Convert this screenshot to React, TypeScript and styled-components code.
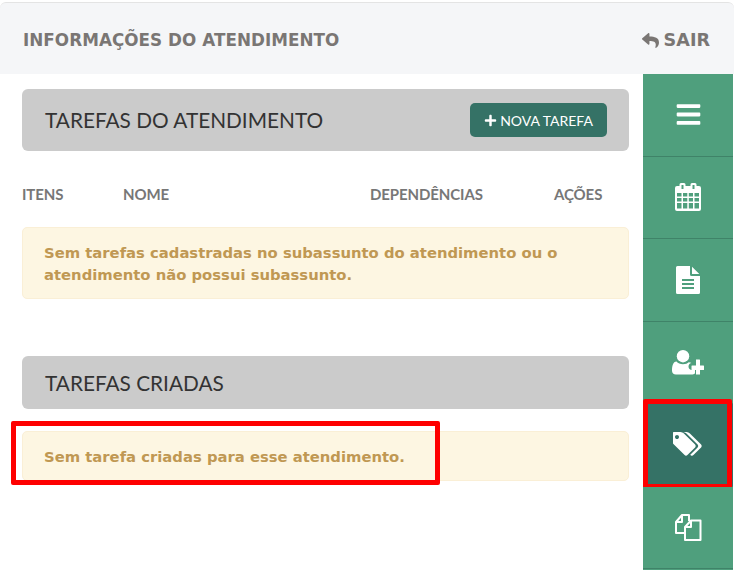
import React from 'react';
import styled, { createGlobalStyle } from 'styled-components';
import { FaBars, FaPlus, FaReply } from 'react-icons/fa';

const GlobalStyle = createGlobalStyle`
  html, body {
    margin: 0;
    padding: 0;
    background: #fff;
    overflow: hidden;
  }
  * { box-sizing: border-box; }
`;

const CalendarIcon = () => (
  <svg width="26" height="28" viewBox="0 0 26 28">
    <path
      fill="#fff"
      fillRule="evenodd"
      d="M6 0h3a1.5 1.5 0 0 1 1.5 1.5V3h5V1.5A1.500 1.500 0 0 1 17 0h3a1.500 1.500 0 0 1 1.500 1.500V3H24a2 2 0 0 1 2 2v21a2 2 0 0 1-2 2H2a2 2 0 0 1-2-2V5a2 2 0 0 1 2-2h2.500V1.500A1.500 1.500 0 0 1 6 0zM6.500 2v4h2V2zM17.500 2v4h2V2zM2 10v3.500h4.500V10zM8 10v3.500h4.300V10zM13.800 10v3.500H18V10zM19.500 10v3.500H24V10zM2 15v3.500h4.500V15zM8 15v3.500h4.300V15zM13.800 15v3.500H18V15zM19.500 15v3.500H24V15zM2 20v5.500h4.500V20zM8 20v5.500h4.300V20zM13.800 20v5.500H18V20zM19.500 20v5.500H24V20z"
    />
  </svg>
);

const DocIcon = () => (
  <svg width="24" height="28" viewBox="0 0 24 28">
    <path
      fill="#fff"
      fillRule="evenodd"
      d="M1.500 0H14v8.500a1.500 1.500 0 0 0 1.500 1.500H24v16.500a1.500 1.500 0 0 1-1.500 1.500h-21A1.500 1.500 0 0 1 0 26.500v-25A1.500 1.500 0 0 1 1.500 0zM6 13v2h12v-2zM6 17v2h12v-2zM6 21v2h12v-2zM16 0.800L23.300 8H16z"
    />
  </svg>
);

const UserPlusIcon = () => (
  <svg width="32" height="25" viewBox="0 0 32 25">
    <g fill="#fff">
      <circle cx="11" cy="6.200" r="6.200" />
      <path d="M4.500 11.500C6 13.200 8.300 14.200 11 14.200s4.500-1 5.700-2c1 0 2 .3 2.800.8-1.600.2-3 1.500-3 3.500 0 2 1.500 3.500 3.500 3.500h3v3.200c-1 1-2 1.300-3.500 1.300H4c-2.500 0-4-1.400-4-3.800 0-4.500 1-9.200 4.500-9.200z" />
      <path d="M24 9.500h3.500a.5.5 0 0 1 .5.5v5.500h3.500a.5.5 0 0 1 .5.5v3.500a.5.5 0 0 1-.5.5H28v4.500h-4V20h-4a.5.5 0 0 1-.5-.5V16a.5.5 0 0 1 .5-.5h4z" />
    </g>
  </svg>
);

const TagsIcon = () => (
  <svg width="30" height="26" viewBox="0 128 1920 1664">
    <path
      fill="#fff"
      d="M384 448q0-53-37.500-90.500t-90.500-37.500-90.500 37.500-37.500 90.500 37.500 90.500 90.500 37.500 90.500-37.500 37.500-90.500zm1067 576q0 53-37 90l-491 492q-39 37-91 37-53 0-90-37l-715-716q-38-37-64.500-101t-26.500-117v-416q0-52 38-90t90-38h416q53 0 117 26.500t102 64.500l715 714q37 39 37 91zm384 0q0 53-37 90l-491 492q-39 37-91 37-36 0-59-14t-53-45l470-470q37-37 37-90 0-52-37-91l-715-714q-38-38-102-64.500t-117-26.500h224q53 0 117 26.500t102 64.500l715 714q37 39 37 91z"
    />
  </svg>
);

const FilesIcon = () => (
  <svg width="28" height="28" viewBox="0 0 28 28">
    <g fill="none" stroke="#fff" strokeWidth="2" strokeLinejoin="round">
      <path d="M11 20H2V9l6-7h7v6" />
      <path d="M8 2.500V9H2" />
      <path d="M11 14l6-6.500h9.500V27H11z" />
      <path d="M17 7.500V14h-6" />
    </g>
  </svg>
);

const sideItems = [
  { key: 'menu', icon: <FaBars size={27} /> },
  { key: 'agenda', icon: <CalendarIcon /> },
  { key: 'docs', icon: <DocIcon /> },
  { key: 'user', icon: <UserPlusIcon /> },
  { key: 'tags', icon: <TagsIcon />, active: true },
  { key: 'files', icon: <FilesIcon /> },
];

export default function App() {
  return (
    <Page>
      <GlobalStyle />
      <Header>
        <HeaderTitle>INFORMAÇÕES DO ATENDIMENTO</HeaderTitle>
        <ExitLink>
          <FaReply size={17} />
          SAIR
        </ExitLink>
      </Header>
      <Body>
        <Main>
          <SectionHeader $tall>
            <SectionTitle>TAREFAS DO ATENDIMENTO</SectionTitle>
            <NewButton>
              <FaPlus size={13} />
              NOVA TAREFA
            </NewButton>
          </SectionHeader>
          <TableHead>
            <span>ITENS</span>
            <span>NOME</span>
            <span>DEPENDÊNCIAS</span>
            <span>AÇÕES</span>
          </TableHead>
          <Alert>
            Sem tarefas cadastradas no subassunto do atendimento ou o atendimento não possui subassunto.
          </Alert>
          <SectionHeader>
            <SectionTitle>TAREFAS CRIADAS</SectionTitle>
          </SectionHeader>
          <Alert $second>
            Sem tarefa criadas para esse atendimento.
            <AlertMark />
          </Alert>
        </Main>
        <Sidebar>
          {sideItems.map((item) => (
            <SideItem key={item.key} $active={item.active}>
              {item.icon}
              {item.active && <SideMark />}
            </SideItem>
          ))}
        </Sidebar>
      </Body>
    </Page>
  );
}

const Page = styled.div`
  width: 734px;
  height: 570px;
  padding-top: 2px;
  overflow: hidden;
  font-family: Lato, "Liberation Sans", sans-serif;
`;

const Header = styled.header`
  height: 72px;
  padding: 3px 24px 0 23px;
  display: flex;
  align-items: center;
  justify-content: space-between;
  background: #f5f6f8;
  border-top: 1px solid #e4e4e4;
  border-radius: 6px 6px 0 0;
  color: #7a7674;
  font-family: "DejaVu Sans", Verdana, sans-serif;
  font-weight: 700;
`;

const HeaderTitle = styled.h1`
  margin: 0;
  font-size: 16.8px;
  font-weight: 700;
  letter-spacing: 0.04px;
`;

const ExitLink = styled.a`
  display: flex;
  align-items: center;
  gap: 5px;
  font-size: 17.6px;
`;

const Body = styled.div`
  display: flex;
  align-items: stretch;
  height: 496px;
`;

const Main = styled.main`
  width: 643px;
  padding: 15px 14px 0 22px;
`;

const SectionHeader = styled.div<{ $tall?: boolean }>`
  height: ${(p) => (p.$tall ? '62px' : '53px')};
  padding: 0 22px 0 23px;
  display: flex;
  align-items: center;
  justify-content: space-between;
  background: #cbcbcb;
  border-radius: 6px;
`;

const SectionTitle = styled.h2`
  margin: 0 0 1px;
  font-size: 20.8px;
  font-weight: 400;
  color: #333;
`;

const NewButton = styled.button`
  width: 137px;
  height: 34px;
  display: flex;
  align-items: center;
  justify-content: center;
  gap: 3px;
  padding: 0;
  border: 0;
  border-radius: 5px;
  background: #357266;
  color: #fff;
  font-family: Lato, sans-serif;
  font-size: 14px;
`;

const TableHead = styled.div`
  margin-top: 34px;
  height: 19px;
  display: grid;
  grid-template-columns: 101px 247px 184px 1fr;
  font-size: 15px;
  font-weight: 700;
  line-height: 19px;
  letter-spacing: -0.1px;
  color: #777;
`;

const Alert = styled.div<{ $second?: boolean }>`
  position: relative;
  margin-top: ${(p) => (p.$second ? '22px' : '23px')};
  margin-bottom: ${(p) => (p.$second ? '0' : '57px')};
  height: ${(p) => (p.$second ? '50px' : '72px')};
  padding: 14px 21px;
  background: #fdf6e2;
  border: 1px solid #faefd6;
  border-radius: 5px;
  font-family: "DejaVu Sans", Verdana, sans-serif;
  font-size: 14.8px;
  font-weight: 700;
  line-height: 22px;
  color: #c09853;
`;

const AlertMark = styled.span`
  position: absolute;
  left: -12px;
  top: -11px;
  width: 429px;
  height: 64px;
  border: 5px solid #fe0000;
  border-radius: 2px;
`;

const Sidebar = styled.nav`
  width: 90px;
  display: flex;
  flex-direction: column;
  background: #4f9f7d;
`;

const SideItem = styled.div<{ $active?: boolean }>`
  position: relative;
  height: 82.5px;
  flex: none;
  display: flex;
  align-items: center;
  justify-content: center;
  background: ${(p) => (p.$active ? '#357266' : '#4f9f7d')};
  border-bottom: 1px solid #3f8368;
  color: #fff;
`;

const SideMark = styled.span`
  position: absolute;
  left: 0;
  top: -5px;
  width: 89px;
  height: 90px;
  border: 5px solid #fe0000;
  border-radius: 2px;
`;
